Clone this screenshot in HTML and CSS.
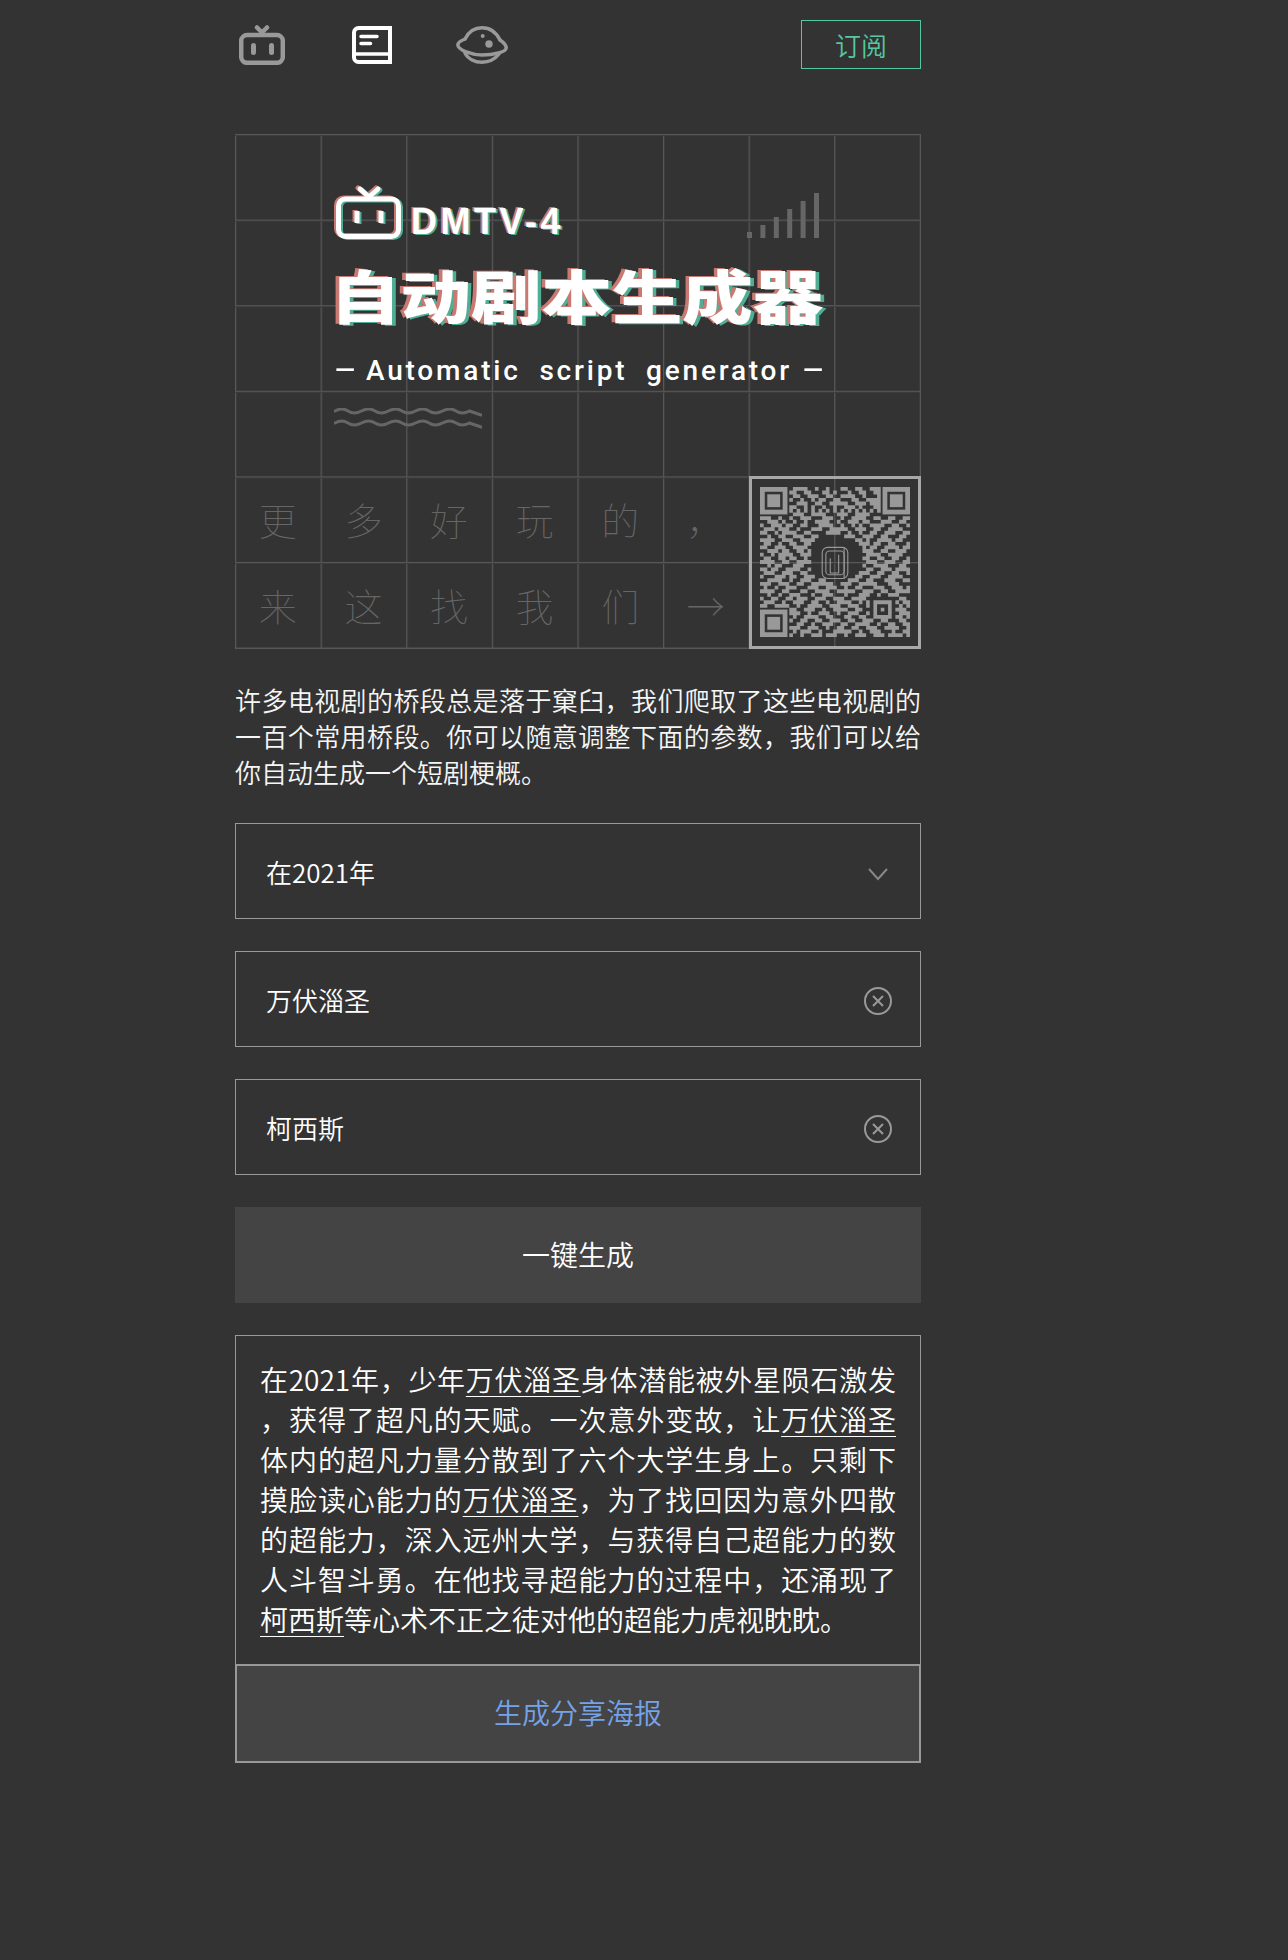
FILE: index.html
```html
<!DOCTYPE html>
<html lang="zh-CN">
<head>
<meta charset="utf-8">
<title>自动剧本生成器</title>
<link rel="stylesheet" href="styles.css">
</head>
<body>
<main class="page">
  <header class="topbar">
    <nav class="nav">
      <svg class="nav-tv" width="46" height="40" viewBox="0 0 46 40" fill="none" stroke="#999" stroke-width="4.5" stroke-linecap="round" stroke-linejoin="round"><path d="M18 2.500l5 5 5-5"/><rect x="2.200" y="10" width="41.600" height="27.800" rx="6"/><path d="M14.500 20.500v7M32.500 20.500v7" stroke-width="5"/></svg>
      <svg class="nav-book" width="40" height="38" viewBox="0 0 40 38" fill="none" stroke="#fff" stroke-width="4"><path d="M38 2H6.500A4.500 4.500 0 0 0 2 6.500V31.500A4.500 4.500 0 0 0 6.500 36H38Z"/><path d="M3 28H38" stroke-width="3.500"/><path d="M9 10.500H25M9 17.500H18.500" stroke-width="3.500" stroke-linecap="round"/></svg>
      <svg class="nav-planet" width="52" height="38" viewBox="0 0 52 38" fill="none" stroke="#999" stroke-width="3.500" stroke-linecap="round"><path d="M9 13C13 5 20 1.800 26 1.800C33 1.800 40 6 44 14"/><path d="M9 13C4 15 1.800 17 1.800 19C2 24 16 29 26 29C38 29 50 26 50.200 22C50.200 19 47 16 44 14"/><path d="M9 27C12 33 19 36.200 26 36.200C33 36.200 39 33 43 28"/><circle cx="33" cy="18" r="3.700" fill="#999" stroke="none"/><circle cx="26.700" cy="10" r="2" fill="#999" stroke="none"/></svg>
    </nav>
    <a class="subscribe">订阅</a>
  </header>

  <section class="poster">
    <div class="poster-top">
      <div class="poster-brand">
        <svg class="poster-logo" width="69" height="56" viewBox="-2 -1 69 56" fill="none" stroke-width="5" stroke-linecap="round" stroke-linejoin="round">
          <defs><g id="tv"><path d="M24 3L33 11L42 3"/><rect x="2.500" y="13" width="60" height="37.500" rx="7"/><path d="M21 25V37M45 25V37" stroke-linecap="butt"/></g></defs>
          <use href="#tv" x="-2" y="-1" stroke="#c87a72"/>
          <use href="#tv" x="2" y="1" stroke="#4fae93"/>
          <use href="#tv" stroke="#fff"/>
        </svg>
        <span class="poster-code">DMTV-4</span>
        <svg class="poster-signal" width="72" height="45" viewBox="0 0 72 45" fill="#666"><rect x="0" y="39" width="5" height="6"/><rect x="13.400" y="32" width="5" height="13"/><rect x="26.800" y="24" width="5" height="21"/><rect x="40.200" y="16" width="5" height="29"/><rect x="53.600" y="8" width="5" height="37"/><rect x="67" y="0" width="5" height="45"/></svg>
      </div>
      <h1 class="poster-title">自动剧本生成器</h1>
      <div class="poster-sub"><span class="dash">–</span><span>Automatic script generator</span><span class="dash">–</span></div>
      <svg class="poster-wave" width="148" height="22" viewBox="0 0 148 22" fill="none" stroke="#666" stroke-width="3" stroke-linecap="round"><path d="M1 3Q8 -1 14 3T27.500 3T41 3T54.500 3T68 3T81.500 3T95 3T108.500 3T122 3T135.500 3L147 7"/><path d="M1 15Q8 11 14 15T27.500 15T41 15T54.500 15T68 15T81.500 15T95 15T108.500 15T122 15T135.500 15L147 19"/></svg>
    </div>
    <div class="poster-foot">
      <span>更</span><span>多</span><span>好</span><span>玩</span><span>的</span><span>，</span>
      <div class="qr">
        <svg class="qr-code" width="150" height="150" viewBox="0 0 41 41" fill="none" stroke="#999" stroke-width="1.050">
          <path d="M9 .5H13M15 .5H16M18 .5H19M22 .5H24M26 .5H28M30 .5H33M8 1.500H10M12 1.500H14M17 1.500H19M20 1.500H21M24 1.500H25M27 1.500H29M31 1.500H33M9 2.500H11M13 2.500H16M18 2.500H20M22 2.500H26M28 2.500H29M32 2.500H33M8 3.500H9M11 3.500H12M14 3.500H15M16 3.500H18M20 3.500H22M25 3.500H27M29 3.500H33M10 4.500H13M15 4.500H17M19 4.500H24M26 4.500H29M30 4.500H33M8 5.500H10M12 5.500H13M14 5.500H15M17 5.500H18M20 5.500H21M23 5.500H26M27 5.500H28M31 5.500H33M8 6.500H9M10 6.500H11M12 6.500H13M14 6.500H15M16 6.500H17M18 6.500H19M20 6.500H21M22 6.500H23M24 6.500H25M26 6.500H27M28 6.500H29M30 6.500H31M32 6.500H33M9 7.500H12M14 7.500H18M21 7.500H24M26 7.500H30M0 8.500H3M5 8.500H6M8 8.500H9M11 8.500H14M17 8.500H20M22 8.500H23M25 8.500H29M31 8.500H33M35 8.500H37M39 8.500H41M2 9.500H5M6 9.500H7M9 9.500H10M12 9.500H13M15 9.500H19M21 9.500H22M24 9.500H27M28 9.500H30M33 9.500H36M38 9.500H40M0 10.500H1M3 10.500H6M7 10.500H9M11 10.500H13M16 10.500H20M22 10.500H23M25 10.500H26M27 10.500H28M30 10.500H34M36 10.500H38M40 10.500H41M1 11.500H4M5 11.500H8M10 11.500H11M14 11.500H17M19 11.500H24M26 11.500H29M31 11.500H33M35 11.500H39M0 12.500H2M4 12.500H5M6 12.500H10M12 12.500H14M18 12.500H22M24 12.500H25M27 12.500H28M30 12.500H32M34 12.500H37M39 12.500H41M2 13.500H3M5 13.500H7M9 13.500H12M14 13.500H16M23 13.500H26M28 13.500H31M33 13.500H35M38 13.500H40M0 14.500H4M6 14.500H9M11 14.500H15M26 14.500H28M29 14.500H30M32 14.500H36M37 14.500H39M1 15.500H3M5 15.500H6M8 15.500H10M12 15.500H14M27 15.500H30M31 15.500H33M35 15.500H37M40 15.500H41M0 16.500H2M4 16.500H7M9 16.500H13M28 16.500H29M30 16.500H32M34 16.500H38M39 16.500H41M2 17.500H5M6 17.500H8M10 17.500H12M13 17.500H14M28 17.500H31M33 17.500H35M37 17.500H40M0 18.500H1M3 18.500H4M5 18.500H9M11 18.500H14M29 18.500H33M35 18.500H39M1 19.500H3M5 19.500H7M8 19.500H10M12 19.500H13M28 19.500H30M32 19.500H34M36 19.500H38M40 19.500H41M0 20.500H4M6 20.500H8M10 20.500H14M29 20.500H32M34 20.500H37M39 20.500H41M2 21.500H3M4 21.500H6M9 21.500H12M28 21.500H29M31 21.500H35M38 21.500H40M0 22.500H2M3 22.500H5M7 22.500H11M13 22.500H14M29 22.500H31M33 22.500H36M37 22.500H41M1 23.500H4M6 23.500H9M11 23.500H13M27 23.500H30M32 23.500H34M36 23.500H38M40 23.500H41M0 24.500H1M4 24.500H7M8 24.500H10M12 24.500H15M26 24.500H28M30 24.500H33M35 24.500H39M2 25.500H6M8 25.500H9M11 25.500H14M16 25.500H18M24 25.500H27M29 25.500H31M34 25.500H37M39 25.500H41M0 26.500H3M5 26.500H8M10 26.500H12M14 26.500H20M22 26.500H25M27 26.500H32M35 26.500H38M1 27.500H2M4 27.500H5M7 27.500H10M13 27.500H16M18 27.500H21M23 27.500H24M26 27.500H28M31 27.500H34M36 27.500H39M40 27.500H41M0 28.500H4M6 28.500H8M11 28.500H13M15 28.500H19M21 28.500H26M28 28.500H31M33 28.500H35M37 28.500H41M2 29.500H3M5 29.500H6M8 29.500H11M14 29.500H15M17 29.500H20M23 29.500H24M27 29.500H30M32 29.500H33M35 29.500H38M0 30.500H1M3 30.500H5M7 30.500H9M10 30.500H13M15 30.500H18M20 30.500H23M25 30.500H29M38 30.500H40M1 31.500H4M6 31.500H7M9 31.500H12M14 31.500H16M18 31.500H19M21 31.500H25M27 31.500H28M29 31.500H30M31 31.500H36M37 31.500H38M39 31.500H41M0 32.500H2M4 32.500H8M10 32.500H11M13 32.500H17M19 32.500H22M24 32.500H27M29 32.500H30M31 32.500H32M35 32.500H36M38 32.500H39M40 32.500H41M8 33.500H10M12 33.500H15M17 33.500H18M20 33.500H24M26 33.500H28M31 33.500H32M33 33.500H34M35 33.500H36M37 33.500H40M8 34.500H11M13 34.500H14M16 34.500H19M21 34.500H22M24 34.500H27M29 34.500H30M31 34.500H32M35 34.500H36M38 34.500H41M9 35.500H10M12 35.500H16M18 35.500H20M23 35.500H25M27 35.500H29M31 35.500H36M37 35.500H39M40 35.500H41M8 36.500H9M11 36.500H13M15 36.500H17M19 36.500H22M24 36.500H26M28 36.500H31M33 36.500H35M38 36.500H40M10 37.500H12M14 37.500H15M17 37.500H20M22 37.500H24M26 37.500H30M32 37.500H33M35 37.500H37M39 37.500H41M8 38.500H11M13 38.500H16M18 38.500H19M21 38.500H23M25 38.500H27M29 38.500H32M34 38.500H38M40 38.500H41M9 39.500H10M11 39.500H14M16 39.500H17M20 39.500H25M27 39.500H28M30 39.500H33M36 39.500H37M39 39.500H41M8 40.500H9M11 40.500H12M14 40.500H17M18 40.500H21M23 40.500H24M26 40.500H29M31 40.500H34M35 40.500H39M40 40.500H41"/>
          <g stroke-width="1.300">
            <rect x=".65" y=".65" width="6.200" height="6.200"/><rect x="2" y="2" width="3.500" height="3.500" fill="#999" stroke="none"/>
            <rect x="34.150" y=".65" width="6.200" height="6.200"/><rect x="35.500" y="2" width="3.500" height="3.500" fill="#999" stroke="none"/>
            <rect x=".65" y="34.150" width="6.200" height="6.200"/><rect x="2" y="35.500" width="3.500" height="3.500" fill="#999" stroke="none"/>
          </g>
          <g stroke-width=".3"><rect x="17" y="16.500" width="7" height="8.500" rx="1.500"/><rect x="18" y="17.500" width="5" height="6.500" rx="1"/><path d="M19.200 19.500V23.500H21.500V18.500M23 16.500V25"/></g>
        </svg>
      </div>
      <span>来</span><span>这</span><span>找</span><span>我</span><span>们</span><span>→</span>
    </div>
  </section>

  <p class="intro">许多电视剧的桥段总是落于窠臼，我们爬取了这些电视剧的一百个常用桥段。你可以随意调整下面的参数，我们可以给你自动生成一个短剧梗概。</p>

  <div class="field">
    <span>在2021年</span>
    <svg class="field-chevron" width="28" height="14" viewBox="0 0 28 14" fill="none" stroke="#888" stroke-width="2"><path d="M5 2L14 12L23 2"/></svg>
  </div>
  <div class="field">
    <span>万伏淄圣</span>
    <svg class="field-clear" width="28" height="28" viewBox="0 0 28 28" fill="none" stroke="#999" stroke-width="2"><circle cx="14" cy="14" r="13"/><path d="M9 9L19 19M19 9L9 19"/></svg>
  </div>
  <div class="field">
    <span>柯西斯</span>
    <svg class="field-clear" width="28" height="28" viewBox="0 0 28 28" fill="none" stroke="#999" stroke-width="2"><circle cx="14" cy="14" r="13"/><path d="M9 9L19 19M19 9L9 19"/></svg>
  </div>
  <a class="generate">一键生成</a>

  <section class="result">
    <div class="story">
      <span class="line">在2021年，少年<u>万伏淄圣</u>身体潜能被外星陨石激发</span>
      <span class="line">，获得了超凡的天赋。一次意外变故，让<u>万伏淄圣</u></span>
      <span class="line">体内的超凡力量分散到了六个大学生身上。只剩下</span>
      <span class="line">摸脸读心能力的<u>万伏淄圣</u>，为了找回因为意外四散</span>
      <span class="line">的超能力，深入远州大学，与获得自己超能力的数</span>
      <span class="line">人斗智斗勇。在他找寻超能力的过程中，还涌现了</span>
      <span class="line last"><u>柯西斯</u>等心术不正之徒对他的超能力虎视眈眈。</span>
    </div>
    <a class="share">生成分享海报</a>
  </section>
</main>
</body>
</html>
```

FILE: styles.css
```css
* { box-sizing: border-box; }
html, body { margin: 0; background: #333; }
body {
  min-height: 100vh;
  color: #fff;
  font-family: "Noto Sans CJK SC", "Noto Sans", sans-serif;
  font-weight: 350;
}
.page { width: 921px; padding: 20px 0 0 235px; }

.topbar { display: flex; justify-content: space-between; align-items: center; height: 49px; margin-bottom: 65px; }
.nav { display: flex; align-items: center; gap: 64px; margin-left: 4px; }
.nav-book { margin-left: 3px; }
.subscribe {
  display: flex; align-items: center; justify-content: center;
  width: 120px; height: 49px; padding-bottom: 1px;
  border: 1px solid #52c9a1; color: #55c8a0; font-size: 26px;
}

.poster {
  display: flex; flex-direction: column; justify-content: space-between;
  width: 686px; height: 515px;
  border-right: 1px solid #585858; border-bottom: 1px solid #585858;
  background-image:
    linear-gradient(#585858 1px, #3d3d3d 1px, #3d3d3d 2px, transparent 2px),
    linear-gradient(90deg, #585858 1px, #3d3d3d 1px, #3d3d3d 2px, transparent 2px);
  background-size: 85.6px 85.6px;
}
.poster-top { padding: 53px 101px 0 99px; }
.poster-brand { display: flex; align-items: flex-end; height: 53px; }
.poster-logo { margin: 0 -2px -1px 0; flex: none; }
.poster-code {
  margin: 0 0 -2px 10px;
  font: bold 36px/40px "Liberation Sans", sans-serif; letter-spacing: 3.500px; color: #fff;
  text-shadow: -2px -1px 0 #c87a72, 2px 1px 0 #4fae93;
}
.poster-signal { margin: 0 0 2px auto; }
.poster-title {
  margin: 28px 0 4px -4px; height: 53px;
  font-size: 58px; line-height: 53px; font-weight: 900; white-space: nowrap;
  transform: scaleX(1.215); transform-origin: left center;
  text-shadow: -3px -1px 0 #c87a72, 3px 1px 0 #4fae93;
}
.poster-sub {
  display: flex; justify-content: space-between;
  margin: 35px -3px 0 2px; height: 30px;
  font: 500 28px/30px Roboto, sans-serif; letter-spacing: 2.800px; word-spacing: 9px; white-space: nowrap;
}
.dash { display: inline-block; transform: scaleX(1.250); letter-spacing: 0; }
.poster-wave { display: block; margin-top: 22px; }

.poster-foot {
  display: grid;
  grid-template-columns: repeat(6, 85.6px) 1fr;
  grid-template-rows: 85.6px 85.6px;
  color: #666; font-size: 38px; font-weight: 100;
}
.poster-foot > span { display: flex; align-items: center; justify-content: center; padding-bottom: 2px; }
.qr {
  grid-column: 7; grid-row: 1 / 3;
  display: flex; align-items: center; justify-content: center;
  margin: -1px -1px -1px 0;
  border: 3px solid #a8a8a8;
}
.qr-code { filter: blur(.4px); }

.intro { margin: 33px 0 33px; font-size: 26px; line-height: 36px; text-align: justify; color: #f6f6f6; }

.field {
  display: flex; align-items: center; justify-content: space-between;
  height: 96px; margin-bottom: 32px; padding: 0 28px 0 30px;
  border: 1px solid #999; font-size: 26px;
}
.field-chevron { margin-top: 5px; }
.field-clear { margin-top: 3px; }
.generate {
  display: flex; align-items: center; justify-content: center;
  height: 96px; margin-bottom: 32px; padding-bottom: 2px;
  background: #444; font-size: 28px;
}
.result { border: 1px solid #999; border-bottom: 0; }
.story { padding: 23px 24px 25px; font-size: 28px; line-height: 40px; }
.line { display: block; text-align: justify; text-align-last: justify; white-space: nowrap; }
.line.last { text-align-last: left; }
.line u { text-decoration-thickness: 1px; text-underline-offset: 5px; }
.share {
  display: flex; align-items: center; justify-content: center;
  height: 99px; margin: 0 -1px; padding-bottom: 3px;
  border: 2px solid #999; background: #444; color: #74a3ea; font-size: 28px;
}
```
